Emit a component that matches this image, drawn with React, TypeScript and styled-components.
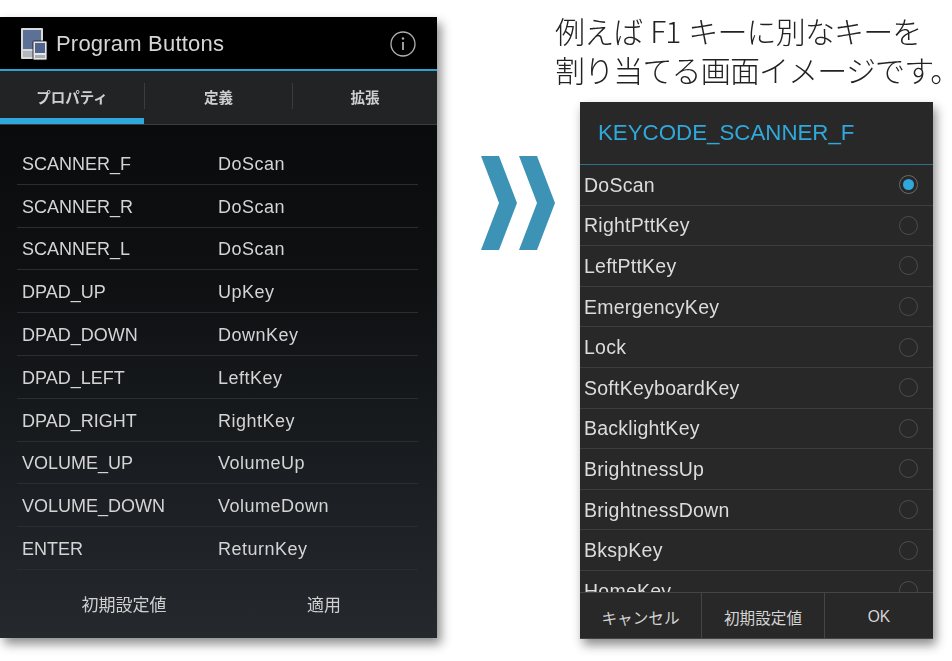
import React from "react";
import styled, { createGlobalStyle } from "styled-components";

const SANS = `"Liberation Sans", "Noto Sans CJK JP", sans-serif`;

const keyRows = [
    ["SCANNER_F", "DoScan"],
    ["SCANNER_R", "DoScan"],
    ["SCANNER_L", "DoScan"],
    ["DPAD_UP", "UpKey"],
    ["DPAD_DOWN", "DownKey"],
    ["DPAD_LEFT", "LeftKey"],
    ["DPAD_RIGHT", "RightKey"],
    ["VOLUME_UP", "VolumeUp"],
    ["VOLUME_DOWN", "VolumeDown"],
    ["ENTER", "ReturnKey"],
];

const options = [
    "DoScan",
    "RightPttKey",
    "LeftPttKey",
    "EmergencyKey",
    "Lock",
    "SoftKeyboardKey",
    "BacklightKey",
    "BrightnessUp",
    "BrightnessDown",
    "BkspKey",
    "HomeKey",
];

const tabs = ["プロパティ", "定義", "拡張"];

const AppIcon = () => (
    <svg width="28" height="34" viewBox="0 0 28 34">
        <rect x="1" y="1" width="22" height="31" rx="1" fill="#d8dadc" />
        <rect x="3" y="3" width="18" height="19" fill="#5d7196" />
        <rect x="3" y="24" width="18" height="6" fill="#b4b8bc" />
        <rect x="13" y="14" width="14" height="19" rx="1" fill="#e6e7e8" stroke="#111" strokeWidth="0.8" />
        <rect x="15" y="16" width="10" height="10" fill="#4f658d" />
        <rect x="15" y="28" width="10" height="3" fill="#a8acb0" />
    </svg>
);

const InfoIcon = () => (
    <svg width="26" height="26" viewBox="0 0 26 26" fill="none" stroke="#b0b0b0">
        <circle cx="13" cy="13" r="12" strokeWidth="1.3" />
        <path d="M13 11v8" strokeWidth="1.8" />
        <circle cx="13" cy="7.5" r="1.2" fill="#b0b0b0" stroke="none" />
    </svg>
);

const Chevrons = () => (
    <svg width="74" height="94" viewBox="0 0 74 94" fill="#3d93b5">
        <path d="M0 0h18l18 47-18 47H0l18-47z" />
        <path d="M38 0h18l18 47-18 47H38l18-47z" />
    </svg>
);

export default function App() {
    return (
        <>
            <GlobalStyle />
            <Page>
                <PhonePanel>
                    <ActionBar>
                        <ActionTitle>
                            <AppIcon />
                            <TitleText>Program Buttons</TitleText>
                        </ActionTitle>
                        <InfoIcon />
                    </ActionBar>
                    <TabBar>
                        {tabs.map((tab, i) => (
                            <Tab key={tab} $active={i === 0}>
                                <TabLabel $divider={i > 0}>{tab}</TabLabel>
                            </Tab>
                        ))}
                    </TabBar>
                    <PanelBody>
                        <KeyList>
                            {keyRows.map(([name, value]) => (
                                <KeyRow key={name}>
                                    <KeyName>{name}</KeyName>
                                    <KeyValue>{value}</KeyValue>
                                </KeyRow>
                            ))}
                        </KeyList>
                        <BottomActions>
                            <BottomAction>初期設定値</BottomAction>
                            <BottomAction>適用</BottomAction>
                        </BottomActions>
                    </PanelBody>
                </PhonePanel>
                <ArrowColumn>
                    <Chevrons />
                </ArrowColumn>
                <RightColumn>
                    <Caption>
                        例えば F1 キーに別なキーを
                        <br />
                        割り当てる画面イメージです。
                    </Caption>
                    <Dialog>
                        <DialogTitle>KEYCODE_SCANNER_F</DialogTitle>
                        <OptionList>
                            {options.map((option, i) => (
                                <OptionRow key={option}>
                                    <OptionLabel>{option}</OptionLabel>
                                    <Radio $checked={i === 0} />
                                </OptionRow>
                            ))}
                        </OptionList>
                        <DialogFooter>
                            <FooterButton $width={121}>キャンセル</FooterButton>
                            <FooterButton $width={123}>初期設定値</FooterButton>
                            <FooterButton $width={109}>OK</FooterButton>
                        </DialogFooter>
                    </Dialog>
                </RightColumn>
            </Page>
        </>
    );
}

const GlobalStyle = createGlobalStyle`
    html, body {
        margin: 0;
        background: #fff;
        overflow: hidden;
    }
    body {
        font-family: ${SANS};
    }
`;

const Page = styled.div`
    display: flex;
    align-items: flex-start;
    width: 952px;
    height: 661px;
    overflow: hidden;
`;

const PhonePanel = styled.div`
    width: 437px;
    height: 621px;
    margin-top: 17px;
    flex-shrink: 0;
    display: flex;
    flex-direction: column;
    box-shadow: 4px 6px 10px rgba(0, 0, 0, 0.45);
    filter: blur(0.45px);
`;

const ActionBar = styled.div`
    height: 50px;
    flex-shrink: 0;
    padding: 2px 21px 0 20px;
    display: flex;
    align-items: center;
    justify-content: space-between;
    background: #000;
    border-bottom: 2px solid #2aa3d0;
`;

const ActionTitle = styled.div`
    display: flex;
    align-items: center;
    gap: 8px;
`;

const TitleText = styled.span`
    font-size: 22px;
    color: #d6d6d6;
    letter-spacing: 0.2px;
`;

const TabBar = styled.div`
    height: 53px;
    flex-shrink: 0;
    display: grid;
    grid-template-columns: 144px 148px 145px;
    background: #212325;
    border-bottom: 1px solid #3a3c3e;
`;

const Tab = styled.div<{ $active: boolean }>`
    display: flex;
    padding: 12px 0 ${p => (p.$active ? 9 : 15)}px;
    font-size: 14.5px;
    font-weight: 700;
    color: #cfcfcf;
    border-bottom: ${p => (p.$active ? "6px solid #2fa9dc" : "0")};
`;

const TabLabel = styled.div<{ $divider: boolean }>`
    flex: 1;
    display: flex;
    align-items: center;
    justify-content: center;
    border-left: ${p => (p.$divider ? "1px solid #3a3c3e" : "0")};
`;

const PanelBody = styled.div`
    flex: 1;
    display: flex;
    flex-direction: column;
    background: linear-gradient(#0a0b0d, #0e1012 30%, #25292e);
`;

const KeyList = styled.div`
    margin: 17px 19px 0 17px;
`;

const KeyRow = styled.div`
    height: 42.8px;
    box-sizing: border-box;
    display: flex;
    align-items: center;
    padding: 3px 0 0 5px;
    border-bottom: 1px solid #2b2e31;
    font-size: 18px;
    color: #d4d4d4;
`;

const KeyName = styled.span`
    width: 196px;
`;

const KeyValue = styled.span`
    letter-spacing: 0.5px;
`;

const BottomActions = styled.div`
    flex: 1;
    display: grid;
    grid-template-columns: 248px 152px;
`;

const BottomAction = styled.div`
    display: flex;
    align-items: center;
    justify-content: center;
    font-size: 17px;
    color: #cfcfcf;
`;

const ArrowColumn = styled.div`
    width: 74px;
    flex-shrink: 0;
    margin: 156px 0 0 44px;
    display: flex;
`;

const RightColumn = styled.div`
    flex: 1;
    min-width: 0;
    display: flex;
    flex-direction: column;
`;

const Caption = styled.div`
    margin-top: 11px;
    font-size: 30px;
    line-height: 39px;
    font-weight: 300;
    color: #222;
    white-space: nowrap;
    font-family: "Noto Sans CJK JP", sans-serif;
    letter-spacing: -0.85px;
    word-spacing: 2px;
    filter: blur(0.25px);
`;

const Dialog = styled.div`
    width: 353px;
    height: 537px;
    margin: 13px 0 0 25px;
    display: flex;
    flex-direction: column;
    background: #282828;
    box-shadow: 3px 6px 10px rgba(0, 0, 0, 0.45);
    filter: blur(0.4px);
`;

const DialogTitle = styled.div`
    height: 62px;
    flex-shrink: 0;
    padding-left: 18px;
    display: flex;
    align-items: center;
    font-size: 22.3px;
    color: #2fa9dc;
    border-bottom: 1px solid #2f6f88;
`;

const OptionList = styled.div`
    flex: 1;
    min-height: 0;
    overflow: hidden;
`;

const OptionRow = styled.div`
    height: 40.6px;
    box-sizing: border-box;
    padding: 0 15px 0 4px;
    display: flex;
    align-items: center;
    justify-content: space-between;
    border-bottom: 1px solid #3d3d3d;
`;

const OptionLabel = styled.span`
    font-size: 19.5px;
    letter-spacing: 0.25px;
    color: #dcdcdc;
    padding-top: 1px;
`;

const Radio = styled.span<{ $checked: boolean }>`
    width: 19px;
    height: 19px;
    box-sizing: border-box;
    border-radius: 50%;
    border: 1px solid ${p => (p.$checked ? "#6a6a6a" : "#4c4c4c")};
    display: flex;
    align-items: center;
    justify-content: center;

    &::after {
        content: "";
        width: 11px;
        height: 11px;
        border-radius: 50%;
        background: ${p => (p.$checked ? "#2fa9dc" : "transparent")};
    }
`;

const DialogFooter = styled.div`
    height: 45px;
    flex-shrink: 0;
    display: flex;
    background: #282828;
    border-top: 1px solid #454545;
    border-bottom: 1px solid #454545;
`;

const FooterButton = styled.div<{ $width: number }>`
    width: ${p => p.$width}px;
    box-sizing: border-box;
    padding-top: 3px;
    display: flex;
    align-items: center;
    justify-content: center;
    font-size: 15.6px;
    color: #d4d4d4;

    & + & {
        border-left: 1px solid #454545;
    }
`;
